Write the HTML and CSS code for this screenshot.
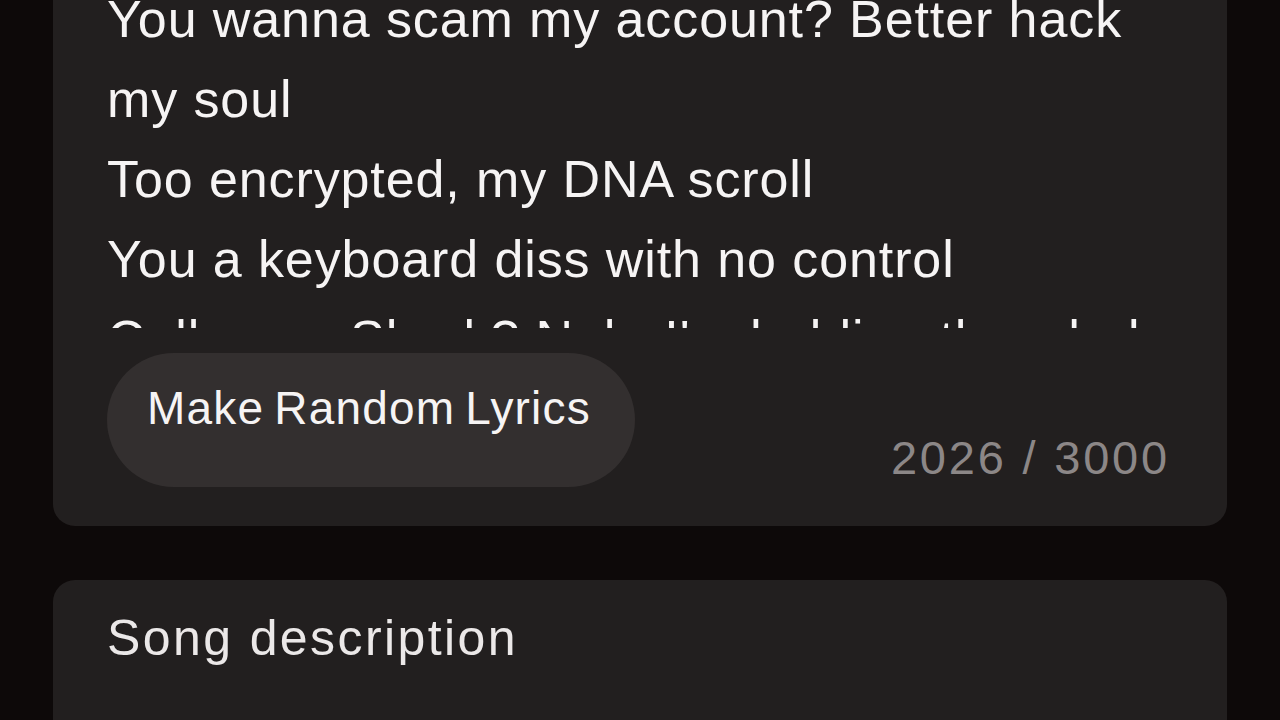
FILE: index.html
```html
<!DOCTYPE html>
<html lang="en">
<head>
    <meta charset="UTF-8">
    <meta name="viewport" content="width=device-width, initial-scale=1.0">
    <title>Lyrics</title>
    <link rel="stylesheet" href="styles.css">
</head>
<body>
    <div class="page">
        <div class="card lyrics-card">
            <div class="lyrics-box">
                <div class="lyrics-text">
                    <p>You wanna scam my account? Better hack my soul</p>
                    <p>Too encrypted, my DNA scroll</p>
                    <p>You a keyboard diss with no control</p>
                    <p>Call me a Shark? Nah, I'm holding the whole</p>
                </div>
            </div>
            <div class="lyrics-footer">
                <button class="random-btn">Make Random Lyrics</button>
                <span class="counter">2026 / 3000</span>
            </div>
        </div>

        <div class="card desc-card">
            <h2 class="card-title">Song description</h2>
        </div>
    </div>
</body>
</html>
```

FILE: styles.css
```css
body {
    margin: 0;
    padding: 0;
    background-color: #0d0909;
    font-family: "Liberation Sans", Arial, sans-serif;
    color: #f6f4f4;
    overflow: hidden;
}
.page {
    padding: 0 53px;
}
.card {
    background: #221f1f;
    border-radius: 22px;
}
.lyrics-card {
    border-top-left-radius: 0;
    border-top-right-radius: 0;
    padding: 0 56px 39px 54px;
}
.lyrics-box {
    height: 328px;
    overflow: hidden;
}
.lyrics-text {
    margin-top: -21px; /* textarea is scrolled a bit */
    font-size: 52px;
    letter-spacing: 0.9px;
    line-height: 80px;
}
.lyrics-text p {
    margin: 0;
}
.lyrics-footer {
    margin-top: 25px;
    display: flex;
    justify-content: space-between;
    align-items: flex-end;
}
.random-btn {
    height: 134px;
    box-sizing: border-box;
    padding: 0 44px 24px 40px;
    border: none;
    border-radius: 67px;
    background: #332f2f;
    color: #f6f4f4;
    font-family: "Liberation Sans", Arial, sans-serif;
    font-size: 46px;
    letter-spacing: 1.2px;
    word-spacing: -4px;
    cursor: pointer;
}
.counter {
    margin-bottom: 6px;
    margin-right: 1px;
    font-size: 47px;
    letter-spacing: 2.8px;
    line-height: 1;
    color: #8c8787;
}
.desc-card {
    margin-top: 54px;
    height: 200px;
    padding: 18px 54px 0;
}
.card-title {
    margin: 0;
    font-size: 50px;
    font-weight: normal;
    letter-spacing: 2.4px;
    line-height: 80px;
    color: #ebe8e8;
}
```
